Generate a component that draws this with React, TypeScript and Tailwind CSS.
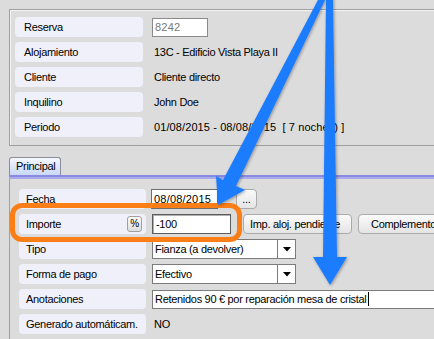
import React from 'react';

const font = { fontFamily: '"Liberation Sans", Arial, sans-serif' };

const Label: React.FC<{ text: string; w: string; pad: string; children?: React.ReactNode }> = ({ text, w, pad, children }) => (
  <div className={`${w} ${pad} h-[20px] shrink-0 rounded-[4px] bg-[#f0f0fa] flex items-center justify-between`}>
    <span>{text}</span>
    {children}
  </div>
);

const Select: React.FC<{ value: string }> = ({ value }) => (
  <div className="w-[144px] h-[20px] shrink-0 border border-[#7c7c7c] bg-white flex">
    <div className="flex-1 pl-[2px] flex items-center">{value}</div>
    <div className="w-[18px] border-l border-[#7c7c7c] flex items-center justify-center">
      <svg width="8" height="5" viewBox="0 0 8 5">
        <path d="M0 0H8L4 4.5Z" fill="#000" />
      </svg>
    </div>
  </div>
);

const Button: React.FC<{ children: React.ReactNode; className?: string }> = ({ children, className = '' }) => (
  <div
    className={`h-[20px] shrink-0 rounded-[4px] border border-[#ababab] bg-gradient-to-b from-[#fbfbfb] to-[#e4e4e4] flex items-center ${className}`}
  >
    {children}
  </div>
);

export default function App() {
  const top = [
    ['Alojamiento', '13C - Edificio Vista Playa II'],
    ['Cliente', 'Cliente directo'],
    ['Inquilino', 'John Doe'],
  ];

  return (
    <div
      className="relative w-[434px] h-[339px] overflow-hidden bg-[#dcdcdc] text-[11px] tracking-[-0.3px] text-black leading-none whitespace-pre"
      style={font}
    >
      {/* Reservation header panel */}
      <div className="ml-[9px] mt-[9px] border-l border-t border-b border-[#a0a0a0] shadow-[inset_1px_1px_0_#f4f4f4] pl-[5px] pt-[7px] pb-[8px] flex flex-col gap-[5px]">
        <div className="flex items-center h-[20px]">
          <Label text="Reserva" w="w-[128px]" pad="pl-[9px]" />
          <div className="ml-[9px] w-[56px] h-[19px] shrink-0 border border-[#8a8a8a] bg-white pl-[2px] flex items-center text-[#7a7a7a] tracking-[0.2px]">
            8242
          </div>
        </div>
        {top.map(([k, v]) => (
          <div key={k} className="flex items-center h-[20px]">
            <Label text={k} w="w-[128px]" pad="pl-[9px]" />
            <div className="ml-[11px] shrink-0">{v}</div>
          </div>
        ))}
        <div className="flex items-center h-[20px]">
          <Label text="Periodo" w="w-[128px]" pad="pl-[9px]" />
          <div className="ml-[11px] shrink-0 tracking-[0.1px]">01/08/2015 - 08/08/2015  [ 7 noches) ]</div>
        </div>
      </div>

      {/* Tab */}
      <div className="mt-[11px] ml-[9px] w-[52px] h-[18px] rounded-t-[3px] border border-b-0 border-[#8c8c9c] bg-gradient-to-b from-[#f4f7ff] to-[#c9d8f6] pl-[6px] flex items-center">
        Principal
      </div>
      <div className="ml-[9px] h-[4px] border-t-2 border-[#8a8ade] bg-[#aaaaee]" />

      {/* Main tab content */}
      <div className="ml-[9px] h-[200px] border-l border-[#a0a0a0] pl-[9px] pt-[10px] flex flex-col gap-[5px]">
        <div className="flex items-center h-[20px]">
          <Label text="Fecha" w="w-[127px]" pad="pl-[7px]" />
          <div className="ml-[5px] w-[67px] h-[20px] shrink-0 border border-[#6e6e6e] bg-white pl-[2px] flex items-center tracking-[0.2px]">08/08/2015</div>
          <Button className="ml-[18px] w-[21px] justify-center">...</Button>
        </div>
        <div className="flex items-center h-[20px]">
          <Label text="Importe" w="w-[127px]" pad="pl-[7px] pr-[4px]">
            <div className="w-[15px] h-[16px] rounded-[3px] border border-[#a0a0a0] bg-gradient-to-b from-[#fafafa] to-[#dedede] flex items-center justify-center text-[10px]">
              %
            </div>
          </Label>
          <div className="ml-[6px] w-[79px] h-[20px] shrink-0 border border-[#5c5c5c] shadow-[inset_1px_1px_0_#b0b0b0] bg-white pl-[3px] flex items-center">-100</div>
          <Button className="ml-[12px] w-[109px] pl-[6px]">Imp. aloj. pendiente</Button>
          <Button className="ml-[6px] w-[100px] pl-[12px]">Complementos</Button>
        </div>
        <div className="flex items-center h-[20px]">
          <Label text="Tipo" w="w-[127px]" pad="pl-[7px]" />
          <div className="ml-[6px]">
            <Select value="Fianza (a devolver)" />
          </div>
        </div>
        <div className="flex items-center h-[20px]">
          <Label text="Forma de pago" w="w-[127px]" pad="pl-[7px]" />
          <div className="ml-[6px]">
            <Select value="Efectivo" />
          </div>
        </div>
        <div className="flex items-center h-[20px]">
          <Label text="Anotaciones" w="w-[127px]" pad="pl-[7px]" />
          <div className="ml-[6px] w-[300px] h-[19px] shrink-0 border border-[#7c7c7c] bg-white pl-[2px] flex items-center">
            Retenidos 90 € por reparación mesa de cristal
            <span className="ml-px w-px h-[14px] bg-black" />
          </div>
        </div>
        <div className="flex items-center h-[20px]">
          <Label text="Generado automáticam." w="w-[127px]" pad="pl-[7px]" />
          <div className="ml-[8px]">NO</div>
        </div>
      </div>

      {/* Orange highlight */}
      <div className="absolute left-[10px] top-[203px] w-[232px] h-[39px] rounded-[12px] border-[5px] border-[#fb7e17]" />

      {/* Blue arrows */}
      <svg className="absolute inset-0 pointer-events-none" width="434" height="339" viewBox="0 0 434 339">
        <defs>
          <filter id="sh" x="-20%" y="-20%" width="140%" height="140%">
            <feDropShadow dx="1" dy="1" stdDeviation="1.5" floodColor="#000" floodOpacity="0.35" />
          </filter>
        </defs>
        <g fill="#1f7bfe" filter="url(#sh)">
          <path d="M319 -2 L326 -2 L236 186 L245 190 L218 205 L216 176 L223 180 Z" />
          <path d="M326 -2 L333 -2 L337 257 L347 257 L330 285 L313 257 L323 257 Z" />
        </g>
      </svg>
    </div>
  );
}
